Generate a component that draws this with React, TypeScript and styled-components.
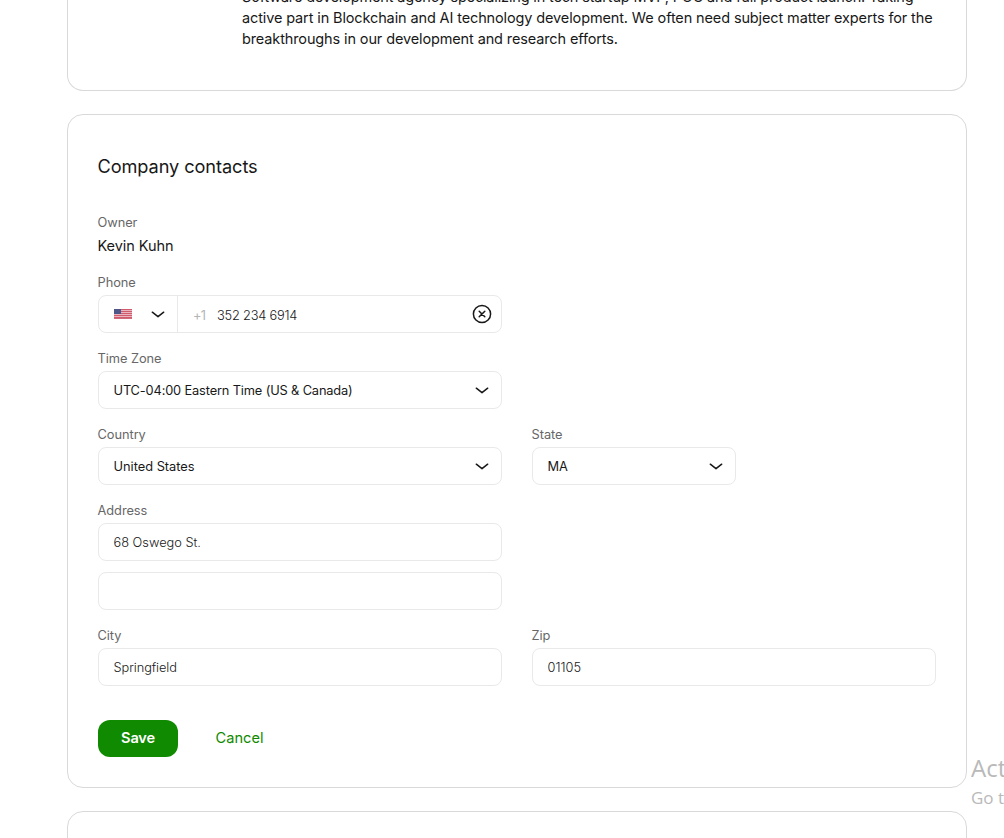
import React from "react";
import styled, { createGlobalStyle } from "styled-components";

const GlobalStyle = createGlobalStyle`
  *, *::before, *::after { box-sizing: border-box; }
  html, body { margin: 0; height: 100%; overflow: hidden; background: #fff; }
  body { font-family: Inter, "Liberation Sans", sans-serif; color: #181818; }
`;

const Page = styled.main`
  position: relative;
  height: 838px;
  overflow: hidden;
  padding-left: 67px;
  display: flex;
  flex-direction: column;
  gap: 23px;
`;

const Card = styled.section`
  flex: none;
  width: 900px;
  padding: 30px;
  border: 1px solid #d9d9d9;
  border-radius: 16px;
`;

const AboutCard = styled(Card)`
  height: 91px;
  border-top: 0;
  border-top-left-radius: 0;
  border-top-right-radius: 0;
  padding: 0 0 0 174px;
`;

const Description = styled.p`
  margin: -14px 0 0;
  font-size: 14.5px;
  line-height: 21px;
`;

const Line = styled.span<{ $ls: number }>`
  display: block;
  white-space: nowrap;
  letter-spacing: ${(p) => p.$ls}px;
`;

const Title = styled.h2`
  margin: 7px 0 33px -0.5px;
  font-size: 18.2px;
  line-height: 28px;
  font-weight: 400;
  letter-spacing: -0.09px;
`;

const Form = styled.div`
  display: flex;
  flex-direction: column;
  gap: 16px;
`;

const Row = styled.div`
  display: grid;
  grid-template-columns: 404px 404px;
  gap: 30px;
`;

const Field = styled.div<{ $width?: number }>`
  display: flex;
  flex-direction: column;
  width: ${(p) => (p.$width ? `${p.$width}px` : "100%")};
`;

const Label = styled.span`
  margin: 0 0 3px -0.5px;
  padding-top: 1px;
  font-size: 12.8px;
  line-height: 18px;
  letter-spacing: -0.04px;
  color: #676767;
`;

const Owner = styled.span`
  margin-left: -0.5px;
  font-size: 14.5px;
  line-height: 22px;
  letter-spacing: -0.06px;
`;

const Box = styled.div<{ $light?: boolean }>`
  display: flex;
  align-items: center;
  height: 38px;
  padding: 0 9px 0 14.5px;
  border: 1px solid #e9e9e9;
  border-radius: 8px;
  font-size: 12.8px;
  font-weight: ${(p) => (p.$light ? 300 : 400)};

  & + & { margin-top: 11px; }
`;

const Value = styled.span<{ $ls?: number }>`
  flex: 1;
  white-space: nowrap;
  letter-spacing: ${(p) => p.$ls ?? 0}px;
`;

const PhoneValue = styled(Value)`
  padding-top: 2px;
  font-weight: 350;
`;

const CountryCode = styled.div`
  display: flex;
  align-items: center;
  justify-content: space-between;
  align-self: stretch;
  width: 64.5px;
  padding-right: 9px;
  margin-right: 15px;
  border-right: 1px solid #e9e9e9;
`;

const Prefix = styled.span`
  width: 24px;
  padding-top: 2px;
  letter-spacing: -0.7px;
  color: #b4b4b4;
`;

const Actions = styled.div`
  display: flex;
  margin-top: 34px;
`;

const Button = styled.button<{ $primary?: boolean }>`
  width: ${(p) => (p.$primary ? 80 : 123)}px;
  height: 37px;
  padding: 0;
  border: 0;
  border-radius: 12px;
  background: ${(p) => (p.$primary ? "#108a00" : "transparent")};
  color: ${(p) => (p.$primary ? "#fff" : "#108a00")};
  font: ${(p) => (p.$primary ? 600 : 400)} 14.6px/35px Inter, sans-serif;
  letter-spacing: ${(p) => (p.$primary ? -0.2 : 0)}px;
`;

const Watermark = styled.aside`
  position: absolute;
  left: 971px;
  top: 752px;
  width: 33px;
  overflow: hidden;
  white-space: nowrap;
  font-family: "Open Sans", "Noto Sans", sans-serif;
  color: #b9b9b9;
`;

const WatermarkTitle = styled.div`
  font-size: 24px;
  line-height: 32px;
`;

const WatermarkText = styled.div`
  font-size: 17px;
  line-height: 27px;
`;

const Chevron = () => (
  <svg width="20" height="20" viewBox="0 0 20 20" fill="none" stroke="#181818" strokeWidth="1.5" strokeLinecap="round" strokeLinejoin="round">
    <path d="M4.3 8.2 10 12.7l5.7-4.5" />
  </svg>
);

const ClearIcon = () => (
  <svg width="20" height="20" viewBox="0 0 20 20" fill="none" stroke="#181818" strokeWidth="1.5" strokeLinecap="round">
    <circle cx="10" cy="10" r="8.6" />
    <path d="m7.2 7.2 5.6 5.6M12.8 7.2l-5.6 5.6" />
  </svg>
);

const Flag = () => (
  <svg width="18" height="10" viewBox="0 0 18 10">
    <rect width="18" height="10" fill="#e9b4bd" />
    {[0, 2, 4, 6, 8].map((y) => (
      <rect key={y} y={y} width="18" height="1" fill="#cf5b6c" />
    ))}
    <rect y="9" width="18" height="1" fill="#d0697a" />
    <rect width="7" height="5" fill="#4f5688" />
  </svg>
);

export default function App() {
  return (
    <>
      <GlobalStyle />
      <Page>
        <AboutCard>
          <Description>
            <Line $ls={-0.16}>Software development agency specializing in tech startup MVP, POC and full product launch. Taking</Line>
            <Line $ls={-0.125}>active part in Blockchain and AI technology development. We often need subject matter experts for the</Line>
            <Line $ls={-0.125}>breakthroughs in our development and research efforts.</Line>
          </Description>
        </AboutCard>
        <Card>
          <Title>Company contacts</Title>
          <Form>
            <Field>
              <Label>Owner</Label>
              <Owner>Kevin Kuhn</Owner>
            </Field>
            <Row>
              <Field>
                <Label>Phone</Label>
                <Box>
                  <CountryCode>
                    <Flag />
                    <Chevron />
                  </CountryCode>
                  <Prefix>+1</Prefix>
                  <PhoneValue $ls={-0.2}>352 234 6914</PhoneValue>
                  <ClearIcon />
                </Box>
              </Field>
            </Row>
            <Row>
              <Field>
                <Label>Time Zone</Label>
                <Box>
                  <Value $ls={-0.14}>UTC-04:00 Eastern Time (US &amp; Canada)</Value>
                  <Chevron />
                </Box>
              </Field>
            </Row>
            <Row>
              <Field>
                <Label>Country</Label>
                <Box>
                  <Value>United States</Value>
                  <Chevron />
                </Box>
              </Field>
              <Field $width={204}>
                <Label>State</Label>
                <Box>
                  <Value>MA</Value>
                  <Chevron />
                </Box>
              </Field>
            </Row>
            <Row>
              <Field>
                <Label>Address</Label>
                <Box $light>
                  <Value>68 Oswego St.</Value>
                </Box>
                <Box $light />
              </Field>
            </Row>
            <Row>
              <Field>
                <Label>City</Label>
                <Box $light>
                  <Value $ls={-0.08}>Springfield</Value>
                </Box>
              </Field>
              <Field>
                <Label>Zip</Label>
                <Box $light>
                  <Value>01105</Value>
                </Box>
              </Field>
            </Row>
          </Form>
          <Actions>
            <Button $primary>Save</Button>
            <Button>Cancel</Button>
          </Actions>
        </Card>
        <Card />
        <Watermark>
          <WatermarkTitle>Act</WatermarkTitle>
          <WatermarkText>Go t</WatermarkText>
        </Watermark>
      </Page>
    </>
  );
}
